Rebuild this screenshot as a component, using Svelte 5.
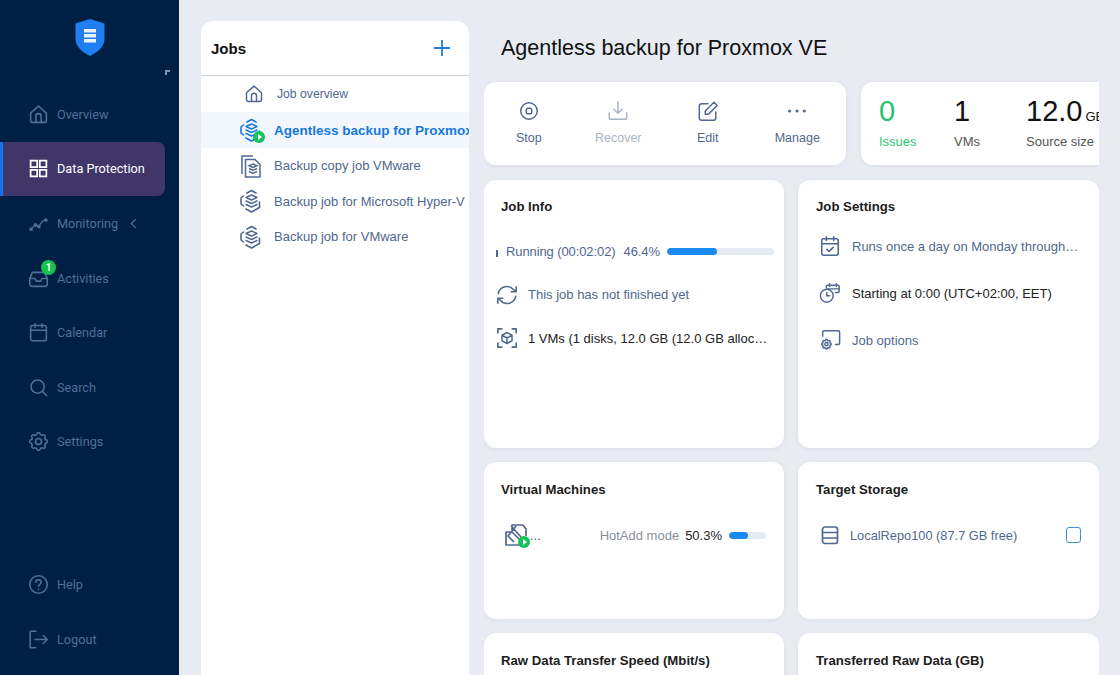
<script lang="ts">
	const mainNav = [
		{ label: 'Overview', icon: 'home' },
		{ label: 'Data Protection', icon: 'grid', active: true },
		{ label: 'Monitoring', icon: 'chart', chevron: true },
		{ label: 'Activities', icon: 'inbox', badge: 1 },
		{ label: 'Calendar', icon: 'calendar' },
		{ label: 'Search', icon: 'search' },
		{ label: 'Settings', icon: 'gear' }
	];
	const footerNav = [
		{ label: 'Help', icon: 'help' },
		{ label: 'Logout', icon: 'logout' }
	];
	const jobs = [
		{ label: 'Agentless backup for Proxmox VE', icon: 'stack', running: true, selected: true },
		{ label: 'Backup copy job VMware', icon: 'copy' },
		{ label: 'Backup job for Microsoft Hyper-V', icon: 'stack' },
		{ label: 'Backup job for VMware', icon: 'stack' }
	];
	const gearPath = 'M10.3 4.3c.4-1.8 3-1.8 3.4 0a1.7 1.7 0 0 0 2.6 1.1c1.5-.9 3.3.8 2.4 2.4a1.7 1.7 0 0 0 1 2.5c1.8.4 1.8 3 0 3.4a1.7 1.7 0 0 0-1 2.6c.9 1.5-.9 3.3-2.4 2.4a1.7 1.7 0 0 0-2.6 1c-.4 1.8-3 1.8-3.4 0a1.7 1.7 0 0 0-2.6-1c-1.5.9-3.3-.9-2.4-2.4a1.7 1.7 0 0 0-1-2.6c-1.8-.4-1.8-3 0-3.4a1.7 1.7 0 0 0 1-2.5c-.9-1.6.9-3.3 2.4-2.4a1.7 1.7 0 0 0 2.6-1.1z';
</script>

{#snippet navIcon(name: string)}
	<svg class="nav-icon" viewBox="0 0 24 24" fill="none" stroke="currentColor" stroke-width="1.8" stroke-linecap="round" stroke-linejoin="round">
		{#if name === 'home'}
			<path d="M3 10.5 12 2.5l9 8V19a2 2 0 0 1-2 2H5a2 2 0 0 1-2-2z" /><path d="M9 21v-7a3 3 0 0 1 6 0v7" />
		{:else if name === 'grid'}
			<path d="M3 3h7.5v7.5H3zM13.5 3H21v7.5h-7.5zM3 13.5h7.5V21H3zM13.5 13.5H21V21h-7.5z" stroke-width="2" stroke-linecap="butt" stroke-linejoin="miter" />
		{:else if name === 'chart'}
			<path d="m4 18 4.5-4.5 3.5 2 4.5-6 3-1.5" stroke-width="1.5" /><circle cx="3.5" cy="18.5" r="1.2" /><circle cx="8.5" cy="13.5" r="1.2" /><circle cx="12.5" cy="15.5" r="1.2" /><circle cx="20.5" cy="8" r="1.2" />
		{:else if name === 'inbox'}
			<path d="M2 12h6l1.5 3h5l1.5-3h6" /><path d="M5 5h14l3 7v6a3 3 0 0 1-3 3H5a3 3 0 0 1-3-3v-6z" />
		{:else if name === 'calendar'}
			<rect x="3" y="4" width="18" height="17.5" rx="2" /><path d="M3 9.5h18M8 2v4M16 2v4" />
		{:else if name === 'search'}
			<circle cx="11" cy="11" r="7.5" /><path d="m16.5 16.5 5 5" />
		{:else if name === 'gear'}
			<g transform="translate(-1.5 -1.5) scale(1.125)"><path d={gearPath} stroke-width="1.6" /><circle cx="12" cy="12" r="3" stroke-width="1.6" /></g>
		{:else if name === 'help'}
			<circle cx="12" cy="12" r="10" /><path d="M9 9.5a3 3 0 0 1 6 0c0 2-3 2.5-3 4.5" /><path d="M12 17.5v.2" />
		{:else if name === 'logout'}
			<path d="M9 2.5H3.5a1 1 0 0 0-1 1v17a1 1 0 0 0 1 1H9" /><path d="M8 12h14M17.5 7.5 22 12l-4.5 4.5" />
		{/if}
	</svg>
{/snippet}

{#snippet jobIcon(name: string, running: boolean)}
	<span class="job-icon">
		{#if name === 'copy'}
			<svg viewBox="0 0 24 24" fill="none" stroke="#50688f" stroke-width="1.5">
				<path d="M3 20V2h11" /><path d="M6.5 5.5H16l5 5V23H6.5z" stroke-linejoin="round" />
				<path d="m14 10 4 1.7-4 1.7-4-1.7zM10 14.5l4 1.7 4-1.7M10 17.5l4 1.7 4-1.7" stroke-width="1.4" />
			</svg>
		{:else}
			<svg viewBox="0 0 24 24" fill="none" stroke={running ? '#1578dc' : '#50688f'} stroke-width="1.6" stroke-linejoin="round" stroke-linecap="round">
				<path d="M8 4 12.5 1.5 17 4" /><path d="M4.5 7 2 9v6l2.5 2M7 20l5.5 3 8-4.5V13" />
				<path d="m12.5 6 5.5 2.5-5.5 2.5L7 8.5z" stroke-width="1.4" /><path d="m7 12 5.5 2.5L18 12M7 15.5l5.5 2.5 5.5-2.5" stroke-width="1.4" />
			</svg>
		{/if}
		{#if running}
			<span class="play"></span>
		{/if}
	</span>
{/snippet}

<div class="app">
	<nav class="sidebar">
		<div class="logo">
			<svg width="30" height="37" viewBox="0 0 30 37">
				<path d="M15 0 29.5 4.5V20C29.5 28 22 33.5 15 37 8 33.5.5 28 .5 20V4.5z" fill="#1f7ff0" />
				<path d="M9 10h12v3.5H9zM9 15h12v3.5H9zM9 20h12v3.5H9z" fill="#eaf3ff" />
			</svg>
		</div>
		<div class="collapse"></div>
		<ul class="nav-list">
			{#each mainNav as item}
				<li class="nav-item" class:active={item.active}>
					{@render navIcon(item.icon)}
					<span>{item.label}</span>
					{#if item.chevron}
						<svg class="chevron" viewBox="0 0 8 12" fill="none" stroke="currentColor" stroke-width="1.4"><path d="M6.5 1 1.5 6l5 5" /></svg>
					{/if}
					{#if item.badge}
						<b class="badge">{item.badge}</b>
					{/if}
				</li>
			{/each}
		</ul>
		<ul class="nav-list footer">
			{#each footerNav as item}
				<li class="nav-item">
					{@render navIcon(item.icon)}
					<span>{item.label}</span>
				</li>
			{/each}
		</ul>
	</nav>

	<aside class="jobs">
		<header class="jobs-head">
			<h2>Jobs</h2>
			<svg width="16" height="16" viewBox="0 0 16 16" stroke="#1f7fd6" stroke-width="1.8"><path d="M8 0v16M0 8h16" /></svg>
		</header>
		<div class="job-overview">
			<svg viewBox="0 0 24 24" fill="none" stroke="#50688f" stroke-width="1.8" stroke-linejoin="round">
				<path d="M3 10.5 12 2.5l9 8V19a2 2 0 0 1-2 2H5a2 2 0 0 1-2-2z" /><path d="M9 21v-7a3 3 0 0 1 6 0v7" />
			</svg>
			<span>Job overview</span>
		</div>
		{#each jobs as job}
			<div class="job-row" class:selected={job.selected}>
				{@render jobIcon(job.icon, !!job.running)}
				<span class="job-label">{job.label}</span>
			</div>
		{/each}
	</aside>

	<main class="content">
		<h1>Agentless backup for Proxmox VE</h1>
		<div class="top-row">
			<div class="card toolbar">
				<div class="tool">
					<svg viewBox="0 0 24 24" fill="none" stroke="currentColor" stroke-width="1.6"><circle cx="12" cy="12" r="9" /><rect x="9" y="9" width="6" height="6" rx="1.5" /></svg>
					<span>Stop</span>
				</div>
				<div class="tool disabled">
					<svg viewBox="0 0 24 24" fill="none" stroke="currentColor" stroke-width="1.6" stroke-linecap="round" stroke-linejoin="round"><path d="M12 2v12M7.5 10l4.5 4.5 4.5-4.5" /><path d="M2.5 14v5a2 2 0 0 0 2 2h15a2 2 0 0 0 2-2v-5" /></svg>
					<span>Recover</span>
				</div>
				<div class="tool">
					<svg viewBox="0 0 24 24" fill="none" stroke="currentColor" stroke-width="1.6" stroke-linecap="round" stroke-linejoin="round"><path d="M12 4H5a2.5 2.5 0 0 0-2.5 2.5v13A2.5 2.5 0 0 0 5 22h13a2.5 2.5 0 0 0 2.5-2.5V13" /><path d="M9 15.5V12l9.500-9.500L22 6l-9.500 9.500z" /></svg>
					<span>Edit</span>
				</div>
				<div class="tool">
					<svg viewBox="0 0 24 24" fill="currentColor"><circle cx="4" cy="12" r="1.7" /><circle cx="12" cy="12" r="1.7" /><circle cx="20" cy="12" r="1.7" /></svg>
					<span>Manage</span>
				</div>
			</div>
			<div class="card stats">
				<div class="stat ok"><strong>0</strong><span>Issues</span></div>
				<div class="stat vms"><strong>1</strong><span>VMs</span></div>
				<div class="stat size"><strong>12.0<small>GB</small></strong><span>Source size</span></div>
			</div>
		</div>

		<div class="grid">
			<section class="card tall">
				<h3>Job Info</h3>
				<div class="info running-row">
					<i class="tick"></i>
					<span class="link">Running (00:02:02)</span>
					<span class="link pct">46.4%</span>
					<div class="bar wide"><div style="width: 46.4%"></div></div>
				</div>
				<div class="info">
					<svg class="info-icon" viewBox="0 0 24 24" fill="none" stroke="#50688f" stroke-width="1.7" stroke-linecap="round" stroke-linejoin="round">
						<path d="M2.5 10.5A9.5 9.5 0 0 1 19 6l3 2.5M22 3v5.5h-5.5" />
						<path d="M21.5 13.5A9.5 9.5 0 0 1 5 18l-3-2.5M2 21v-5.5h5.5" />
					</svg>
					<span class="link">This job has not finished yet</span>
				</div>
				<div class="info">
					<svg class="info-icon" viewBox="0 0 24 24" fill="none" stroke="#50688f" stroke-width="1.6" stroke-linejoin="round">
						<path d="M2 7V2h5M17 2h5v5M22 17v5h-5M7 22H2v-5" stroke-width="1.8" />
						<path d="m12 6 5.5 3v6L12 18l-5.5-3V9zM6.5 9l5.5 3 5.5-3M12 12v6" />
					</svg>
					<span class="dark ellipsis vm-summary">1 VMs (1 disks, 12.0 GB (12.0 GB allocated))</span>
				</div>
			</section>

			<section class="card tall">
				<h3>Job Settings</h3>
				<div class="info first">
					<svg class="info-icon" viewBox="0 0 24 24" fill="none" stroke="#50688f" stroke-width="1.7" stroke-linecap="round" stroke-linejoin="round">
						<rect x="3" y="4" width="18" height="18" rx="2" /><path d="M3 9.5h18M8 2v4M16 2v4M8.500 15.500l2.500 2.500 4.500-4.500" />
					</svg>
					<span class="link ellipsis schedule">Runs once a day on Monday through Friday</span>
				</div>
				<div class="info">
					<svg class="info-icon" viewBox="0 0 24 24" fill="none" stroke="#50688f" stroke-width="1.6" stroke-linecap="round" stroke-linejoin="round">
						<circle cx="8.5" cy="15" r="7" /><path d="M8.5 11.5V15h3" /><path d="M8 6V5a1.500 1.500 0 0 1 1.500-1.500h11A1.500 1.500 0 0 1 22 5v5a1.500 1.500 0 0 1-1.500 1.500H18M8.500 7.500H22M11.500 2v3M19 2v3" />
					</svg>
					<span class="dark">Starting at 0:00 (UTC+02:00, EET)</span>
				</div>
				<div class="info">
					<svg class="info-icon" viewBox="0 0 24 24" fill="none" stroke="#50688f" stroke-width="1.6" stroke-linecap="round" stroke-linejoin="round">
						<path d="M4 8V4a2 2 0 0 1 2-2h15a1.500 1.500 0 0 1 1.500 1.500V15a2 2 0 0 1-2 2H18" />
						<g transform="translate(1.2 9.6) scale(.58)"><path d={gearPath} stroke-width="2.8" /><circle cx="12" cy="12" r="3" stroke-width="2.8" /></g>
					</svg>
					<span class="link">Job options</span>
				</div>
			</section>

			<section class="card short">
				<h3>Virtual Machines</h3>
				<div class="vm-row">
					<span class="vm-icon">
						<svg viewBox="0 0 24 24" fill="none" stroke="#50688f" stroke-width="1.7" stroke-linejoin="round">
							<path d="M8 7V2h11l3 4v7M2 9h6l9 9v4H2zM12 3 4 13l6 6M7 3l10 11" />
						</svg>
						<span class="play"></span>
					</span>
					<span class="muted-dots">...</span>
					<span class="mode">HotAdd mode</span>
					<span class="dark">50.3%</span>
					<div class="bar narrow"><div style="width: 50.3%"></div></div>
				</div>
			</section>

			<section class="card short">
				<h3>Target Storage</h3>
				<div class="storage-row">
					<svg class="info-icon small" viewBox="0 0 20 20" fill="none" stroke="#50688f" stroke-width="1.7" stroke-linejoin="round">
						<rect x="2.5" y="2" width="15" height="16.5" rx="2.5" /><path d="M2.5 7.5h15M2.5 13h15" />
					</svg>
					<span class="link grow">LocalRepo100 (87.7 GB free)</span>
					<span class="checkbox"></span>
				</div>
			</section>

			<section class="card stub"><h3>Raw Data Transfer Speed (Mbit/s)</h3></section>
			<section class="card stub"><h3>Transferred Raw Data (GB)</h3></section>
		</div>
	</main>
</div>

<style>
	:global(body) {
		margin: 0;
		background: #e8ebf1;
	}

	.app {
		display: flex;
		height: 675px;
		overflow: hidden;
		font-family: 'Liberation Sans', Arial, sans-serif;
		background: #e8ebf1;
	}

	/* Sidebar */
	.sidebar {
		position: relative;
		flex: 0 0 179px;
		background: #001f45;
		color: #4f6f97;
		font-family: Roboto, 'Liberation Sans', sans-serif;
		font-size: 12.7px;
		display: flex;
		flex-direction: column;
	}

	.logo {
		height: 87px;
		padding: 19px 0 0 75px;
		box-sizing: border-box;
	}

	.collapse {
		position: absolute;
		left: 165px;
		top: 70px;
		width: 5px;
		height: 5px;
		border-left: 2px solid #8095b0;
		border-top: 2px solid #8095b0;
		box-sizing: border-box;
	}

	.nav-list {
		list-style: none;
		margin: 0;
		padding: 0;
	}

	.footer {
		margin-top: 88px;
	}

	.nav-item {
		position: relative;
		display: flex;
		align-items: center;
		gap: 8px;
		height: 54.6px;
		width: 165px;
		padding-left: 28px;
		box-sizing: border-box;
	}

	.nav-item.active {
		background: #40366a;
		color: #fff;
		border-left: 3px solid #1572ea;
		padding-left: 25px;
		border-radius: 0 8px 8px 0;
		height: 54px;
		margin-bottom: .6px;
	}

	.nav-icon {
		width: 21px;
		height: 21px;
		flex: none;
	}

	.chevron {
		width: 7px;
		height: 11px;
		margin-left: 4px;
	}

	.badge {
		position: absolute;
		left: 41px;
		top: 9px;
		width: 15px;
		height: 15px;
		border-radius: 50%;
		background: #15c24e;
		color: #fff;
		font-size: 10px;
		line-height: 15px;
		text-align: center;
		font-weight: 700;
	}

	/* Jobs panel */
	.jobs {
		flex: 0 0 268px;
		margin: 21px 15px 0 22px;
		background: #fff;
		border-radius: 12px 12px 0 0;
		box-sizing: border-box;
		overflow: hidden;
		font-size: 13px;
		color: #50688f;
	}

	.jobs-head {
		display: flex;
		align-items: center;
		justify-content: space-between;
		height: 54px;
		padding: 0 19px 0 10px;
		border-bottom: 1px solid #c8ced6;
	}

	.jobs-head h2 {
		margin: 0;
		font-size: 15px;
		font-weight: 700;
		color: #111;
	}

	.job-overview {
		display: flex;
		align-items: center;
		gap: 13px;
		height: 36px;
		padding-left: 43px;
		font-size: 12.2px;
	}

	.job-overview svg {
		width: 20px;
		height: 20px;
	}

	.job-row {
		display: flex;
		align-items: center;
		gap: 11px;
		height: 35.5px;
		padding-left: 38px;
		white-space: nowrap;
	}

	.job-row.selected {
		background: #f2f7fd;
		height: 36px;
		color: #1578dc;
		font-weight: 700;
		font-size: 13.5px;
	}

	.job-label {
		overflow: hidden;
	}

	.job-icon {
		position: relative;
		width: 24px;
		height: 24px;
		flex: none;
	}

	.job-icon svg,
	.vm-icon svg {
		width: 100%;
		height: 100%;
		display: block;
	}

	.play {
		position: absolute;
		right: -2px;
		bottom: -1px;
		width: 12px;
		height: 12px;
		border-radius: 50%;
		background: #16c25a;
	}

	.play::after {
		content: '';
		position: absolute;
		left: 4.5px;
		top: 3px;
		border-left: 4.5px solid #fff;
		border-top: 3px solid transparent;
		border-bottom: 3px solid transparent;
	}

	/* Main content */
	.content {
		flex: 0 0 615px;
		overflow: hidden;
		display: flex;
		flex-direction: column;
	}

	h1 {
		flex: none;
		margin: 0;
		height: 82px;
		line-height: 96px;
		padding-left: 17px;
		font-size: 21.5px;
		font-weight: 400;
		color: #111;
		box-sizing: border-box;
	}

	.card {
		background: #fff;
		border-radius: 12px;
		box-shadow: 0 1px 4px rgba(60, 80, 110, 0.08);
	}

	.top-row {
		flex: none;
		display: flex;
		gap: 15px;
		height: 83px;
	}

	.toolbar {
		flex: 0 0 362px;
		display: grid;
		grid-template-columns: repeat(4, 89.5px);
		color: #50688f;
		font-size: 12.5px;
	}

	.tool {
		display: flex;
		flex-direction: column;
		align-items: center;
		padding-top: 18px;
		gap: 9px;
	}

	.tool svg {
		width: 22px;
		height: 22px;
	}

	.tool.disabled {
		color: #a9b4c3;
	}

	.stats {
		flex: 1;
		display: flex;
		border-radius: 12px 0 0 12px;
		white-space: nowrap;
		overflow: hidden;
		min-width: 0;
		font-size: 13px;
		color: #555;
	}

	.stat {
		flex: none;
		display: flex;
		flex-direction: column;
		padding-top: 12px;
	}

	.stat strong {
		font-weight: 400;
		font-size: 29px;
		line-height: 34px;
		color: #111;
		height: 40px;
	}

	.stat small {
		font-size: 13px;
		margin-left: 3px;
	}

	.ok {
		margin-left: 18px;
		width: 75px;
		color: #2ecb72;
	}

	.ok strong {
		color: #1fc56c;
	}

	.vms {
		width: 72px;
	}

	.grid {
		flex: none;
		display: grid;
		grid-template-columns: 300px 301px;
		grid-template-rows: 268px 157px 100px;
		column-gap: 14px;
		row-gap: 14px;
		margin-top: 15px;
	}

	.grid .card {
		padding: 19px 17px 0;
		box-sizing: border-box;
		min-width: 0;
	}

	.grid .card:nth-child(even) {
		padding-left: 18px;
	}

	.grid .short,
	.grid .stub {
		padding-top: 20px;
	}

	h3 {
		margin: 0;
		font-size: 13.2px;
		line-height: 16px;
		font-weight: 700;
		color: #1d1d1d;
	}

	.info {
		display: flex;
		align-items: center;
		height: 24px;
		font-size: 13px;
		margin-top: 19.5px;
		margin-left: -5px;
		gap: 10px;
		min-width: 0;
		white-space: nowrap;
	}

	.tall:nth-child(2) .info {
		margin-top: 23px;
		margin-left: 3px;
		gap: 11px;
	}

	.tall:nth-child(2) .info.first {
		margin-top: 19px;
	}

	.info.running-row {
		margin-top: 24px;
		gap: 0;
		letter-spacing: -0.1px;
	}

	.tick {
		width: 2px;
		height: 7px;
		margin: 4px 8px 0 0;
		background: #50688f;
		flex: none;
	}

	.info-icon {
		width: 22px;
		height: 22px;
		flex: none;
	}

	.info-icon.small {
		width: 20px;
		height: 20px;
	}

	.link {
		color: #50688f;
	}

	.pct {
		margin-left: 8px;
	}

	.dark {
		color: #222;
	}

	.ellipsis {
		overflow: hidden;
		text-overflow: ellipsis;
		min-width: 0;
	}

	.vm-summary {
		margin-right: -4px;
	}

	.schedule {
		margin-right: 3px;
	}

	.bar {
		flex: none;
		height: 7px;
		border-radius: 4px;
		background: #e6eaf3;
		overflow: hidden;
	}

	.bar div {
		height: 100%;
		background: #1b8af0;
		border-radius: 4px;
	}

	.bar.wide {
		width: 107px;
		margin-left: 7px;
	}

	.bar.narrow {
		width: 37px;
		margin: 0 1px 0 7px;
	}

	.vm-row {
		display: flex;
		align-items: center;
		font-size: 13px;
		margin-top: 23px;
		height: 28px;
		white-space: nowrap;
	}

	.vm-icon {
		position: relative;
		width: 24px;
		height: 24px;
		margin-left: 3px;
		flex: none;
	}

	.muted-dots {
		color: #555;
		margin-left: 2px;
	}

	.mode {
		color: #8a8f97;
		margin: 0 6px 0 auto;
	}

	.storage-row {
		display: flex;
		align-items: center;
		gap: 10px;
		font-size: 12.8px;
		margin-top: 23px;
		height: 28px;
		padding-left: 4px;
	}

	.grow {
		flex: 1;
	}

	.checkbox {
		width: 15px;
		height: 16px;
		box-sizing: border-box;
		border: 1.5px solid #3f8fd8;
		border-radius: 3px;
		margin-right: 1px;
	}
</style>
